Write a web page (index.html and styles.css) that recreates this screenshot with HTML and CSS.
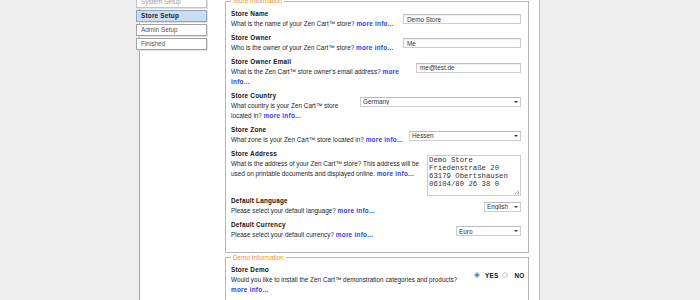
FILE: index.html
```html
<!DOCTYPE html>
<html>
<head>
<meta charset="utf-8">
<link rel="stylesheet" href="styles.css">
</head>
<body>
<div class="page">
  <div class="frame">
    <ul class="steps">
      <li class="done">System Setup</li>
      <li class="current">Store Setup</li>
      <li>Admin Setup</li>
      <li>Finished</li>
    </ul>
    <div class="main">
      <fieldset class="group">
        <legend>Store Information</legend>
        <div class="row">
          <div class="lbl"><b>Store Name</b><p>What is the name of your Zen Cart™ store? <a>more info...</a></p></div>
          <input class="ctl txt w-name" value="Demo Store">
        </div>
        <div class="row">
          <div class="lbl"><b>Store Owner</b><p>Who is the owner of your Zen Cart™ store? <a>more info...</a></p></div>
          <input class="ctl txt w-name" value="Me">
        </div>
        <div class="row">
          <div class="lbl"><b>Store Owner Email</b><p>What is the Zen Cart™ store owner's email address? <a>more info...</a></p></div>
          <input class="ctl txt w-email" value="me@test.de">
        </div>
        <div class="row">
          <div class="lbl"><b>Store Country</b><p>What country is your Zen Cart™ store located in? <a>more info...</a></p></div>
          <span class="ctl sel w-country"><select><option>Germany</option></select></span>
        </div>
        <div class="row">
          <div class="lbl"><b>Store Zone</b><p>What zone is your Zen Cart™ store located in? <a>more info...</a></p></div>
          <span class="ctl sel w-zone"><select><option>Hessen</option></select></span>
        </div>
        <div class="row">
          <div class="lbl"><b>Store Address</b><p>What is the address of your Zen Cart™ store? This address will be used on printable documents and displayed online. <a>more info...</a></p></div>
          <span class="ctl areawrap"><textarea class="area">Demo Store
Friedenstraße 20
63179 Obertshausen
06104/80 26 38 0</textarea></span>
        </div>
        <div class="row">
          <div class="lbl"><b>Default Language</b><p>Please select your default language? <a>more info...</a></p></div>
          <span class="ctl sel w-lang"><select><option>English</option></select></span>
        </div>
        <div class="row">
          <div class="lbl"><b>Default Currency</b><p>Please select your default currency? <a>more info...</a></p></div>
          <span class="ctl sel w-cur"><select><option>Euro</option></select></span>
        </div>
      </fieldset>
      <fieldset class="group demo">
        <legend>Demo Information</legend>
        <div class="row">
          <div class="lbl"><b>Store Demo</b><p>Would you like to install the Zen Cart™ demonstration categories and products? <a>more info...</a></p></div>
          <div class="ctl radios">
            <span class="radio on"></span><b class="opt">YES</b>
            <span class="radio"></span><b class="opt">NO</b>
          </div>
        </div>
      </fieldset>
    </div>
  </div>
</div>
</body>
</html>
```
FILE: styles.css
```css
html, body {
  margin: 0;
  background: #eeeeee;
  height: 100%;
  overflow: hidden;
  font-family: "Liberation Sans", Arial, sans-serif;
}
.page {
  display: flex;
  padding-left: 139px;
  margin-top: -4px;
}
.frame {
  display: flex;
  align-items: flex-start;
  width: 399px;
  min-height: 330px;
  background: #ffffff;
  border-left: 1px solid #9ea9b8;
  border-right: 1px solid #bcbcbc;
}
.steps {
  list-style: none;
  margin: 0 0 0 -4px;
  padding: 0;
  width: 71px;
  flex: none;
}
.steps li {
  box-sizing: border-box;
  height: 12px;
  margin-bottom: 2px;
  padding-left: 4px;
  border: 1px solid #a2a2a2;
  box-shadow: 1px 1px 0 #e2e2e2;
  background: #ffffff;
  color: #555555;
  font-size: 6.4px;
  line-height: 10px;
}
.steps li.done { color: #a0a0a0; border-color: #c4c4c4; }
.steps li.current {
  background: #cddcf1;
  border-color: #8fa3c2;
  color: #222222;
  font-weight: bold;
  letter-spacing: 0.2px;
}
.main {
  margin-left: 18px;
  width: 304px;
  flex: none;
}
.group {
  margin: 0;
  min-width: 0;
  border: 1px solid #b6b6b6;
  padding: 2.5px 7px 7px 5px;
}
.group legend {
  padding: 0 2px;
  color: #f39427;
  font-size: 6.4px;
  line-height: 10px;
}
.demo { min-height: 60px; }
.row {
  display: flex;
  align-items: flex-start;
  gap: 5px;
}
.lbl {
  flex: 1;
  min-width: 0;
  padding-bottom: 4.2px;
  font-size: 6.4px;
  line-height: 10px;
  color: #262626;
}
.lbl b {
  display: block;
  color: #111111;
  letter-spacing: 0.2px;
}
.lbl p { margin: 0; }
.lbl a {
  color: #1e3fe6;
  font-weight: bold;
  letter-spacing: 0.25px;
}
.ctl {
  flex: none;
  margin-top: 5.7px;
}
.txt {
  box-sizing: border-box;
  height: 10px;
  margin-bottom: 0;
  padding: 0 3px;
  border: 1px solid #cccccc;
  border-top-color: #bdbdbd;
  box-shadow: inset 0 1px 1px #efefef;
  font: 6.4px "Liberation Sans", Arial, sans-serif;
  color: #333333;
  outline: none;
}
.w-name { width: 118px; }
.w-email { width: 105px; }
.w-country { width: 161px; }
.w-zone { width: 112px; }
.w-lang { width: 37px; }
.w-cur { width: 65px; }
.sel {
  position: relative;
  display: block;
  height: 10px;
}
.sel select {
  -webkit-appearance: none;
  appearance: none;
  box-sizing: border-box;
  display: block;
  width: 100%;
  height: 10px;
  margin: 0;
  padding: 0 0 0 2px;
  border: 1px solid #cccccc;
  border-top-color: #bdbdbd;
  border-radius: 0;
  background: #ffffff;
  font: 6.4px "Liberation Sans", Arial, sans-serif;
  color: #333333;
}
.sel::after {
  content: "";
  position: absolute;
  right: 3px;
  top: 4px;
  border-left: 2px solid transparent;
  border-right: 2px solid transparent;
  border-top: 2.5px solid #333333;
}
.areawrap {
  position: relative;
  display: block;
  width: 94px;
  height: 41px;
}
.areawrap::after {
  content: "";
  position: absolute;
  right: 2px;
  bottom: 2px;
  width: 4px;
  height: 4px;
  background: linear-gradient(135deg, transparent 45%, #b5b5b5 45%, #b5b5b5 58%, transparent 58%, transparent 75%, #b5b5b5 75%, #b5b5b5 88%, transparent 88%);
}
.area {
  box-sizing: border-box;
  display: block;
  width: 94px;
  height: 41px;
  margin: 0;
  padding: 1px 1px;
  border: 1px solid #cccccc;
  font: 7.3px/7.8px "Liberation Mono", "Courier New", monospace;
  color: #333333;
  resize: none;
  outline: none;
  overflow: hidden;
}
.radios {
  display: flex;
  align-items: center;
  width: 49px;
  margin-top: 6.5px;
  margin-right: -2px;
  font-size: 6.4px;
  line-height: 7px;
}
.radio {
  box-sizing: border-box;
  width: 6px;
  height: 6px;
  border-radius: 50%;
  border: 1px solid #cfcfcf;
  background: #f3f3f3;
  flex: none;
}
.radio.on {
  background: radial-gradient(circle, #2f78b0 0, #2f78b0 1.3px, #dfe6ee 1.8px);
  border-color: #bcc6d0;
}
.opt {
  color: #111111;
  margin-left: 5px;
  margin-right: 4px;
  letter-spacing: 0.2px;
}
.opt:last-child { margin-right: 0; margin-left: 6px; }
```
